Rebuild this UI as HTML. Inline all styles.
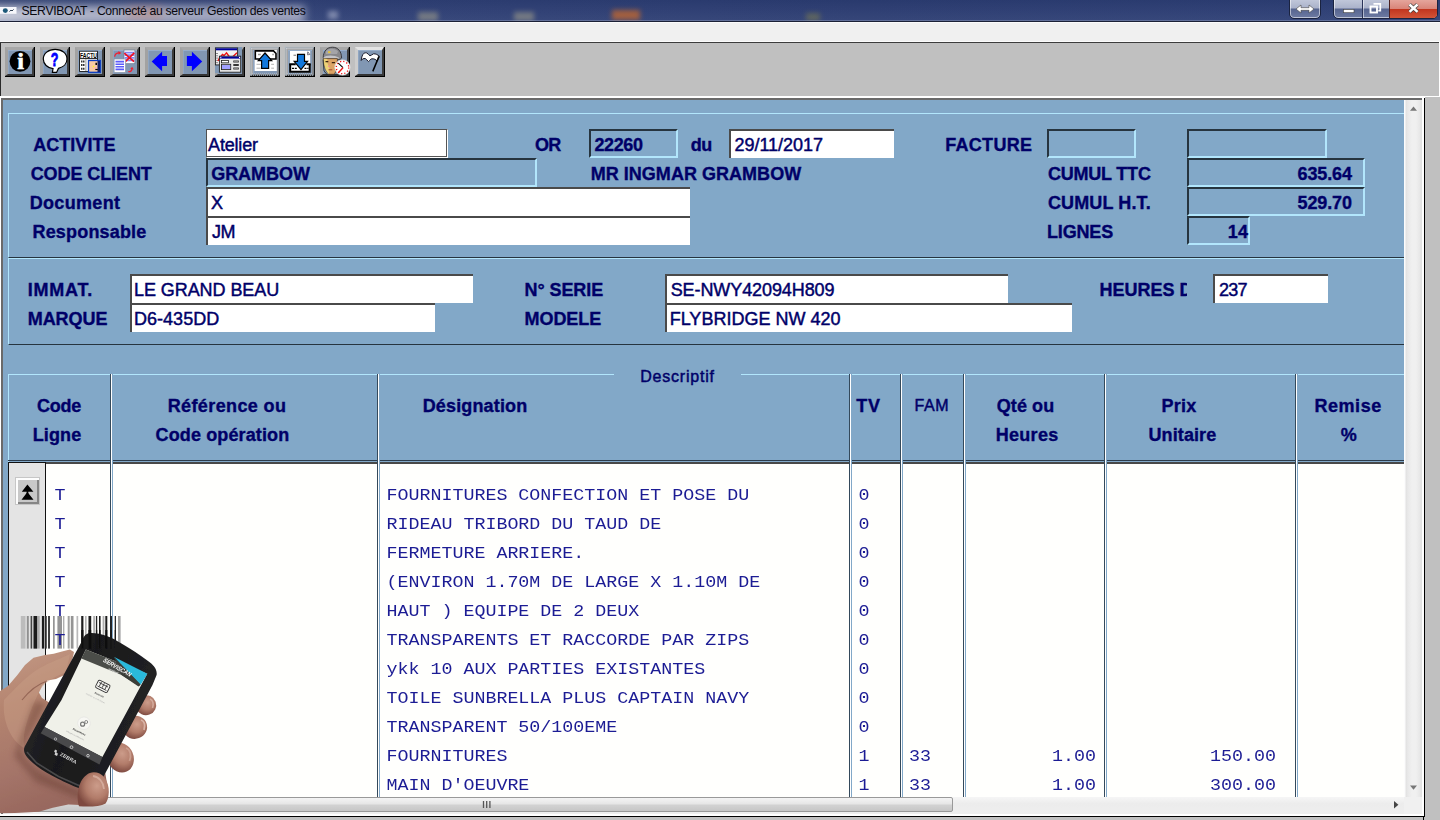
<!DOCTYPE html>
<html lang="fr"><head><meta charset="utf-8"><title>SERVIBOAT - Connecté au serveur Gestion des ventes</title>
<style>
html,body{margin:0;padding:0;}
body{width:1440px;height:820px;overflow:hidden;background:#c0c0c0;position:relative;font-family:"Liberation Sans", sans-serif;}
div,span,svg{position:absolute;box-sizing:border-box;}
.t{white-space:pre;color:#000068;}
.b{font-weight:bold;-webkit-text-stroke:.35px #000068;}
.r{font-weight:normal;-webkit-text-stroke:.45px #000068;}
.m{font-family:"Liberation Mono", monospace;color:#1c1c94;transform:scaleY(.865);}
.fw{background:#fff;border-top:2px solid #4a4a4a;border-left:2px solid #4a4a4a;}
.fb{background:#82a8c8;border-top:2px solid #26343f;border-left:2px solid #26343f;border-right:2px solid #b2e6fc;border-bottom:2px solid #b2e6fc;}
.pn{border-top:1px solid #b2e6fc;border-left:1px solid #b2e6fc;border-bottom:1px solid #26343f;}
.tb{width:29px;height:29px;top:47px;background:#8197b3;border-style:solid;border-width:3px 2px 2px 3px;border-color:#a8a8a8 #3c3c3c #343434 #a2a2a2;box-shadow:inset 0 1px 0 #97adc9,inset 1px 0 0 #8fa5c1,1px 0 0 #000,0 1px 0 #000,1px 1px 0 #000;}
.cs{width:3px;top:374px;height:423px;background:linear-gradient(90deg,#34495b 0,#34495b 1px,#fff 1px,#fff 2px,#82a8c8 2px);}
</style></head><body>
<div style="left:0px;top:0px;width:1440px;height:21px;background:linear-gradient(180deg,rgba(0,0,0,.04),rgba(255,255,255,.05)),linear-gradient(90deg,#3a4a7a 0,#2e3f75 25%,#2b3c72 60%,#2d3f76 100%);overflow:hidden;"><div style="left:328px;top:11px;width:10px;height:8px;background:#c8cce0;filter:blur(2.5px);opacity:0.5"></div><div style="left:418px;top:12px;width:20px;height:9px;background:#c0b890;filter:blur(2.5px);opacity:0.45"></div><div style="left:514px;top:12px;width:20px;height:9px;background:#c0b890;filter:blur(2.5px);opacity:0.45"></div><div style="left:612px;top:10px;width:28px;height:10px;background:#d06a28;filter:blur(2.5px);opacity:0.7"></div><div style="left:806px;top:13px;width:14px;height:8px;background:#9a9440;filter:blur(2.5px);opacity:0.4"></div></div>
<div style="left:0px;top:0px;width:340px;height:21px;overflow:hidden;"><div style="left:-25px;top:6px;width:330px;height:18px;background:linear-gradient(90deg,#d4d7e2 0,#b4b8cb 22%,#a4a9c1 60%,#9ea3bd 100%);filter:blur(4px)"></div><div style="left:128px;top:7px;width:34px;height:12px;background:#c47a62;opacity:.4;filter:blur(4px)"></div></div>
<div style="left:0px;top:20px;width:1440px;height:1px;background:rgba(190,198,222,.32);"></div>
<div style="left:0px;top:21px;width:1440px;height:1px;background:#1b2036;"></div>
<div style="left:0px;top:22px;width:1440px;height:20px;background:#f0f0f0;border-top:1px solid #fbfbfb;"></div>
<div style="left:0px;top:41px;width:1440px;height:1px;background:#fbfbfb;"></div>
<div style="left:0px;top:42px;width:1439px;height:1px;background:#3c3c3c;"></div>
<div style="left:0px;top:43px;width:1439px;height:53px;background:#c0c0c0;border-left:1px solid #2a2a2a;"></div>
<div style="left:1439px;top:42px;width:1px;height:54px;background:#fff;"></div>
<div style="left:0px;top:96px;width:1440px;height:2px;background:#fff;"></div>
<div style="left:0px;top:98px;width:1425px;height:719px;background:#000;"></div>
<div style="left:0px;top:98px;width:1424px;height:718px;background:#fff;"></div>
<div style="left:1px;top:98px;width:1421px;height:716px;background:#82a8c8;border-top:2px solid #6a6a6a;border-left:2px solid #6a6a6a;"></div>
<div style="left:1425px;top:97px;width:15px;height:723px;background:#c0c0c0;"></div>
<div style="left:0px;top:817px;width:1440px;height:3px;background:#c0c0c0;"></div>
<div style="left:1423px;top:817px;width:1px;height:3px;background:#000;"></div>
<svg style="left:0;top:6px" width="18" height="9"><rect x="0" y="1" width="16.500" height="6.800" fill="#f6f7fb"/><ellipse cx="5.300" cy="4.600" rx="2.500" ry="2.300" fill="#1b5878"/><path d="M9.500 5.600l1.500-1.600 1 1 1.600-1.600" stroke="#345" stroke-width="1" fill="none"/></svg>
<div style="left:1289px;top:-2px;width:32px;height:21px;border:1px solid #1a2340;border-radius:0 0 5px 5px;background:linear-gradient(#c3c9db 0,#aab2ca 48%,#56648f 52%,#6e7ba3 100%);box-shadow:inset 0 0 0 1px rgba(255,255,255,.55);"><svg style="left:5px;top:5px" width="20" height="10"><path d="M1 5 L6 1 L6 3.7 L14 3.7 L14 1 L19 5 L14 9 L14 6.3 L6 6.3 L6 9 Z" fill="#fff" stroke="#444" stroke-width=".6"/></svg></div>
<div style="left:1333px;top:-2px;width:105px;height:21px;border:1px solid #1a2340;border-radius:0 0 5px 5px;background:linear-gradient(#c3c9db 0,#aab2ca 48%,#56648f 52%,#6e7ba3 100%);box-shadow:inset 0 0 0 1px rgba(255,255,255,.55);overflow:hidden;"><div style="left:28px;top:0;width:1px;height:20px;background:#2a3358"></div><div style="left:29px;top:0;width:1px;height:20px;background:rgba(255,255,255,.5)"></div><div style="left:55px;top:0;width:49px;height:20px;background:linear-gradient(#e6a9a0 0,#d98579 48%,#c2361f 52%,#d4573a 100%);border-left:1px solid #4a2020"></div><svg style="left:0;top:0" width="105" height="20"><rect x="9.5" y="10.5" width="10.5" height="3.2" fill="#fff" stroke="#444" stroke-width=".6"/><path d="M39.500 4.800h6.800v6.800h-2" fill="none" stroke="#fff" stroke-width="1.700"/><rect x="36.500" y="7.500" width="6.500" height="6" fill="none" stroke="#fff" stroke-width="1.900"/><path d="M75.500 5.500 L83.500 12.800 M83.500 5.500 L75.500 12.800" stroke="#444" stroke-width="3.800"/><path d="M75.500 5.500 L83.500 12.800 M83.500 5.500 L75.500 12.800" stroke="#fff" stroke-width="2.500"/></svg></div>
<div class="tb" style="left:5px;"><svg width="24" height="24" viewBox="0 0 24 24" style="left:0;top:0;overflow:visible"><circle cx="12" cy="11.3" r="10.4" fill="#000"/><text x="12.6" y="19.1" font-family="Liberation Serif, serif" font-weight="bold" font-size="24" fill="#fff" stroke="#fff" stroke-width=".7" text-anchor="middle">i</text></svg></div>
<div class="tb" style="left:40px;"><svg width="24" height="24" viewBox="0 0 24 24" style="left:0;top:0;overflow:visible"><path d="M12.2 -0.6 C19 -0.6 24 3.5 24 9 C24 13.5 20.500 17.2 15.5 18.3 L13.6 22.4 L9.400 22.4 L10 18.6 C4.500 18 0.3 14 0.3 9 C0.3 3.500 5.400 -0.6 12.2 -0.6 Z" fill="#fff" stroke="#000" stroke-width="1.2"/><text transform="translate(11.6 15.8) scale(.66 1)" font-family="Liberation Sans, sans-serif" font-weight="bold" font-size="19" fill="#0000ff" stroke="#0000ff" stroke-width=".8" text-anchor="middle">?</text></svg></div>
<div class="tb" style="left:75px;"><svg width="24" height="24" viewBox="0 0 24 24" style="left:0;top:0;overflow:visible"><rect x="1.6" y="1.2" width="17.800" height="20.3" fill="#fff" stroke="#000" stroke-width=".8"/><text x="2" y="7.9" font-family="Liberation Sans, sans-serif" font-weight="bold" font-size="7" fill="#000" textLength="17" lengthAdjust="spacingAndGlyphs">FACTU</text><path d="M2 8.600h17" stroke="#000" stroke-width=".9"/><path d="M3 11.5h3.500M3 15h3.500M3 18.800h3.500" stroke="#333" stroke-width="1.900" stroke-dasharray="1.500 .5"/><path d="M7.900 9v12" stroke="#999" stroke-width="1"/><rect x="10.500" y="10.5" width="11.800" height="11.800" fill="#f7c9a4" stroke="#0a3cc0" stroke-width="1.3"/><rect x="19.500" y="11" width="2.500" height="11" fill="#10206a"/><path d="M18.200 12.800v2.200" stroke="#000" stroke-width="1.500"/><path d="M17.300 19.500h2.500" stroke="#000" stroke-width="1.200"/><rect x="14.900" y="15.800" width="1.300" height="1.300" fill="#ff0"/><rect x="16.800" y="17.300" width="1.600" height="1.300" fill="#f8a0b0"/></svg></div>
<div class="tb" style="left:110px;"><svg width="24" height="24" viewBox="0 0 24 24" style="left:0;top:0;overflow:visible"><rect x="11" y="0" width="10.900" height="13.700" fill="#fff" stroke="#6a7a90" stroke-width=".7"/><path d="M11.600 2.600h9.800M11.600 5.200h9.800M11.600 7.800h9.800M11.600 10.400h9.800" stroke="#8585f2" stroke-width="1.700"/><path d="M11.300 3.100 L21 11.600 M21.300 2.800 L12.300 11.600" stroke="#f01020" stroke-width="1.700"/><rect x="1.100" y="9" width="11.400" height="13.400" fill="#fff" stroke="#8a96a8" stroke-width=".7"/><path d="M2.500 11.600h8.500M2.500 14.200h8.500M2.500 16.800h8.500M2.500 19.400h8.500" stroke="#5c5cfa" stroke-width="1.600"/><path d="M1.600 6.600 C2 4.200 4 2.900 6.300 2.900" stroke="#f02030" stroke-width="1.300" fill="none"/><path d="M5.400 1 L8.300 2.900 L5.600 4.800 Z" fill="#f02030"/><path d="M15.300 21.700 C17.500 21.700 19 20.500 19 18.700" stroke="#f02030" stroke-width="1.300" fill="none"/><path d="M17.200 18.900 L19.200 16.700 L20.700 19.400 Z" fill="#f02030"/></svg></div>
<div class="tb" style="left:145px;"><svg width="24" height="24" viewBox="0 0 24 24" style="left:0;top:0;overflow:visible"><path d="M3.700 11.400 L14.100 1.800 L14.100 6 L19 6 L19 16 L14.100 16 L14.100 21.200 Z" fill="#0000ff"/></svg></div>
<div class="tb" style="left:180px;"><svg width="24" height="24" viewBox="0 0 24 24" style="left:0;top:0;overflow:visible"><path d="M19.200 11.400 L8.900 1.800 L8.900 6 L3.900 6 L3.900 16 L8.900 16 L8.900 21.200 Z" fill="#0000ff"/></svg></div>
<div class="tb" style="left:215px;"><svg width="24" height="24" viewBox="0 0 24 24" style="left:0;top:0;overflow:visible"><rect x="-3" y="-3" width="27" height="26" fill="#8199b5"/><rect x="-2.600" y="-2.100" width="22.200" height="17" fill="#f2f2f2" stroke="#222" stroke-width=".9"/><rect x="-2.100" y="-1.700" width="21.200" height="2" fill="#00009c"/><path d="M-1 3v11" stroke="#222" stroke-width="1" stroke-dasharray="1 1.300"/><path d="M0 11 L1.500 8 L4.500 4.500 L6 5.600 L8.500 2.800 L11.500 7 M15 6.500 L19 2.700" stroke="#f01010" stroke-width="1.400" fill="none"/><rect x="1.400" y="6.200" width="21.300" height="16" fill="#e9e9e9" stroke="#222" stroke-width=".9"/><rect x="1.900" y="6.600" width="20.300" height="2" fill="#00009c"/><rect x="2.300" y="6.900" width="1" height="1.200" fill="#fff"/><rect x="21" y="6.900" width="1" height="1.200" fill="#fff"/><rect x="3.500" y="10.500" width="7" height="2.300" fill="#fff" stroke="#222" stroke-width=".8"/><rect x="3.500" y="14.300" width="9.200" height="5.300" fill="#fff" stroke="#222" stroke-width=".9"/><path d="M4 16h8.200M4 18h8.200" stroke="#4444ff" stroke-width="1.100"/><path d="M15.300 11.500h5.500M15.300 15h5.500M15.300 18.500h5.500" stroke="#333" stroke-width="2.200"/><path d="M16 11.500h4M16 18.500h4" stroke="#999" stroke-width=".8"/></svg></div>
<div class="tb" style="left:250px;"><svg width="24" height="24" viewBox="0 0 24 24" style="left:0;top:0;overflow:visible"><rect x="-2.500" y="-2.500" width="28" height="27.500" fill="none" stroke="#aab8c4" stroke-width="1.300" stroke-dasharray="1 1"/><rect x="-1.500" y="-1.500" width="26" height="25.500" fill="none" stroke="#c8ccd4" stroke-width="1.200" stroke-dasharray="1 1"/><rect x="1.600" y="0" width="22.200" height="21" fill="#fff"/><path d="M2.300 .9 L20.500 .9 L23 3.500 L23 9 L2.300 9 Z" fill="#fff" stroke="#000" stroke-width="1.600"/><path d="M12 3 L18.700 10.600 L15.600 10.600 L15.600 18.400 L8.600 18.400 L8.600 10.600 L5.300 10.600 Z" fill="#1278dc" stroke="#000" stroke-width="1.200" stroke-linejoin="miter"/><path d="M3.500 14.300h4.200M18.200 14.300h2.800M3.500 18.200h4.200M18.200 18.200h2.800" stroke="#aaa" stroke-width=".9"/><path d="M5 4.500h2.800M19.300 4.500h1.500" stroke="#999" stroke-width="1.400"/></svg></div>
<div class="tb" style="left:285px;"><svg width="24" height="24" viewBox="0 0 24 24" style="left:0;top:0;overflow:visible"><rect x="-2.500" y="-2.500" width="28" height="27.500" fill="none" stroke="#aab8c4" stroke-width="1.300" stroke-dasharray="1 1"/><rect x="-1.500" y="-1.500" width="26" height="25.500" fill="none" stroke="#c8ccd4" stroke-width="1.200" stroke-dasharray="1 1"/><rect x="1.900" y="1" width="20.300" height="21.400" fill="#fff"/><path d="M9.500 4.300 L16.500 4.300 L16.500 11.300 L19.600 11.300 L13 19.600 L6.200 11.300 L9.500 11.300 Z" fill="#1278dc" stroke="#000" stroke-width="1.200"/><path d="M2.200 14.200 L2.200 21.700 L21.700 21.700 L21.700 14.200" fill="none" stroke="#000" stroke-width="2"/><path d="M1.200 14.200h6.500M18.500 14.200h4.200" stroke="#000" stroke-width="2"/><path d="M4 18.400h5.500M16.500 18.400h4" stroke="#000" stroke-width="1.100" stroke-dasharray="2 .8"/><path d="M5.500 5.300h2.500" stroke="#999" stroke-width="1.400"/><path d="M19.800 1.800 L21.800 4.500 L19.500 4.800Z" fill="#fff" stroke="#556" stroke-width=".8"/></svg></div>
<div class="tb" style="left:320px;"><svg width="27" height="27" viewBox="0 0 27 27" style="left:0;top:0;overflow:visible"><path d="M0.200 8.300 C0.200 1 4 -2.800 9.500 -2.800 C15 -2.800 18.600 1.500 18.600 8 L17 9.500 L1 9 Z" fill="#88888c" stroke="#26262a" stroke-width=".8"/><path d="M3 1 C6 -2 12 -2 15 1.500 L14 4 L3 4Z" fill="#a4a4a8"/><path d="M0.200 8 C3 4.800 11 4.800 16 7.800 L15 9.500 L1.500 9 Z" fill="#c4c4c8"/><rect x="5.100" y="1.200" width="2.400" height="1.900" fill="#e6c63a"/><path d="M0.600 8.600 C0.600 14 2 21 6 24.300 L11 24.300 C13.500 22 14.400 16 14.400 8.600 Z" fill="#dca466" stroke="#3a2a1a" stroke-width=".7"/><path d="M0.600 8.600 C0.600 14 2 21 6 24.300 L6.500 18 L4 12 L4.500 9Z" fill="#f4e27c" opacity=".75"/><path d="M2.500 11.700h2.800M8.800 12.600h3.200" stroke="#3a2410" stroke-width="1.300"/><path d="M5.400 15.800l.8 1.200" stroke="#f48aa0" stroke-width="1.300"/><path d="M5.500 19.800h3.800" stroke="#a04a30" stroke-width="1"/><path d="M0 9.500 L1 21 L4 24.300" stroke="#222" stroke-width=".8" fill="none"/><circle cx="19.500" cy="17.500" r="7.800" fill="#fff" stroke="#ccc" stroke-width=".6"/><circle cx="19.500" cy="17.500" r="6.200" fill="none" stroke="#f01010" stroke-width="1.300" stroke-dasharray="1.200 2.047"/><path d="M15.300 13.200 L20 17.700" stroke="#000" stroke-width="1.100"/><path d="M20 17.700 L15.600 22.500" stroke="#f01010" stroke-width="1.300"/></svg></div>
<div class="tb" style="left:355px;border-top-color:#e4e4e4;border-left-color:#cdcdcd;"><svg width="24" height="24" viewBox="0 0 24 24" style="left:0;top:0;overflow:visible"><path d="M3.200 10.500 C3.500 7 4.500 4.500 5.800 3.400 C7 2.700 8 2.700 8.900 3 C10 3.800 11 5.200 12 5.800 C13.200 5.600 14.300 4.200 15.500 3.800 C16.600 3.700 17.700 4 18.700 4.400 L21.400 6.200 L19 11.200 C18.400 10.300 17.700 9.600 17.100 9.300 C15.800 8.800 14.500 8.700 13.200 8.900 C12.200 9.800 11.400 11 10.500 11.600 C9.400 10.600 8.400 9.200 7.300 8.500 C6.400 8.400 5.500 8.500 4.600 8.900 Z" fill="#fff" stroke="#1a1a2a" stroke-width="1" stroke-linejoin="round"/><path d="M21 6.400 L14.800 21.400" stroke="#000" stroke-width="1.500"/></svg></div>
<div class="pn" style="left:8px;top:113px;width:1400px;height:145px;"></div>
<div class="pn" style="left:8px;top:258px;width:1400px;height:87px;"></div>
<div style="left:206px;top:129px;width:242px;height:29px;background:#fff;border:1px solid #505050;border-right:1px solid #fff;border-bottom:1px solid #fff;box-shadow:inset -1px -1px 0 #555;"></div>
<div class="fb" style="left:206px;top:158px;width:331px;height:29px;"></div>
<div class="fw" style="left:206px;top:187px;width:484px;height:29px;"></div>
<div class="fw" style="left:206px;top:216px;width:484px;height:29px;"></div>
<div class="fb" style="left:589px;top:129px;width:89px;height:29px;"></div>
<div class="fw" style="left:729px;top:129px;width:165px;height:29px;"></div>
<div class="fb" style="left:1047px;top:129px;width:89px;height:29px;"></div>
<div class="fb" style="left:1187px;top:129px;width:140px;height:29px;"></div>
<div class="fb" style="left:1187px;top:158px;width:178px;height:29px;"></div>
<div class="fb" style="left:1187px;top:187px;width:178px;height:29px;"></div>
<div class="fb" style="left:1187px;top:216px;width:63px;height:29px;"></div>
<div class="fw" style="left:130px;top:274px;width:343px;height:29px;"></div>
<div class="fw" style="left:130px;top:303px;width:305px;height:29px;"></div>
<div class="fw" style="left:665px;top:274px;width:343px;height:29px;"></div>
<div class="fw" style="left:665px;top:303px;width:407px;height:29px;"></div>
<div class="fw" style="left:1213px;top:274px;width:115px;height:29px;"></div>
<div style="left:8px;top:374px;width:606px;height:1px;background:#b2e6fc;"></div>
<div style="left:741px;top:374px;width:663px;height:1px;background:#b2e6fc;"></div>
<div style="left:8px;top:374px;width:1px;height:88px;background:#b2e6fc;"></div>
<div style="left:8px;top:460px;width:1396px;height:1px;background:#2c3c4c;"></div>
<div style="left:8px;top:462px;width:1396px;height:2px;background:#484848;"></div>
<div style="left:8px;top:464px;width:1396px;height:333px;background:#fffffd;"></div>
<div style="left:8px;top:462px;width:38px;height:335px;background:#e4e4e4;border-left:1px solid #111;border-top:1px solid #111;border-right:1px solid #111;"></div>
<div style="left:15px;top:477px;width:25px;height:28px;background:#c8c8c8;border:1px solid #c6c6c6;box-shadow:inset 2px 2px 0 #fdfdfd,inset -2px -2px 0 #858585;"><svg width="23" height="26" viewBox="16 478 23 26" style="left:0;top:0"><path d="M27.400 484.400 L33.400 491.700 L21.800 491.700 Z M27.400 492 L33.500 499.700 L21.500 499.700 Z" fill="#000"/><rect x="26.600" y="490" width="1.700" height="4" fill="#000"/></svg></div>
<div class="cs" style="left:110px"></div>
<div class="cs" style="left:377px"></div>
<div class="cs" style="left:849px"></div>
<div class="cs" style="left:900px"></div>
<div class="cs" style="left:963px"></div>
<div class="cs" style="left:1104px"></div>
<div class="cs" style="left:1295px"></div>
<svg style="left:0;top:600px" width="220" height="60" viewBox="0 600 220 60"><defs><filter id="bl0"><feGaussianBlur stdDeviation=".45"/></filter></defs><g opacity=".93" filter="url(#bl0)"><rect x="20.8" y="616" width="4.7" height="32.6" fill="#b9b9b9"/><rect x="26.8" y="616" width="2.0" height="32.6" fill="#8a8a8a"/><rect x="30.6" y="616" width="1.6" height="32.6" fill="#3a3a3a"/><rect x="33.5" y="616" width="3.8" height="32.6" fill="#0a0a0a"/><rect x="38.2" y="616" width="1.4" height="32.6" fill="#9a9a9a"/><rect x="41.9" y="616" width="2.4" height="32.6" fill="#111"/><rect x="45.6" y="616" width="1.4" height="32.6" fill="#555"/><rect x="48" y="616" width="2.0" height="32.6" fill="#333"/><rect x="53" y="616" width="1.7" height="32.6" fill="#8c8c8c"/><rect x="57.4" y="616" width="4.6" height="32.6" fill="#8e8e8e"/><rect x="63" y="616" width="1.4" height="32.6" fill="#aaa"/><rect x="67.7" y="616" width="2.0" height="32.6" fill="#9a9a9a"/><rect x="70.8" y="616" width="2.7" height="32.6" fill="#8c8c8c"/><rect x="76.5" y="616" width="1.7" height="32.6" fill="#b4b4b4"/><rect x="81.2" y="616" width="2.2" height="32.6" fill="#111"/><rect x="85.2" y="616" width="1.3" height="32.6" fill="#999"/><rect x="88.5" y="616" width="2.7" height="32.6" fill="#0c0c0c"/><rect x="93.2" y="616" width="1.8" height="32.6" fill="#aaa"/><rect x="95.9" y="616" width="1.3" height="32.6" fill="#151515"/><rect x="99" y="616" width="1.6" height="32.6" fill="#111"/><rect x="102.6" y="616" width="1.8" height="32.6" fill="#a8a8a8"/><rect x="105.3" y="616" width="2.0" height="32.6" fill="#0c0c0c"/><rect x="110.3" y="616" width="1.7" height="32.6" fill="#151515"/><rect x="114.7" y="616" width="1.3" height="32.6" fill="#1a1a1a"/><rect x="118" y="616" width="2.6" height="32.6" fill="#9c9c9c"/></g></svg>
<span class="t r" style="left:21.50px;top:4.50px;font-size:12.2px;line-height:12px;letter-spacing:-0.321px;color:#08080f;-webkit-text-stroke:0;">SERVIBOAT - Connecté au serveur Gestion des ventes</span>
<span class="t b" style="left:33.20px;top:136.00px;font-size:18px;line-height:18px;letter-spacing:0.043px;">ACTIVITE</span>
<span class="t b" style="left:30.70px;top:165.00px;font-size:18px;line-height:18px;letter-spacing:-0.091px;">CODE CLIENT</span>
<span class="t b" style="left:29.70px;top:194.00px;font-size:18px;line-height:18px;letter-spacing:0.327px;">Document</span>
<span class="t b" style="left:32.50px;top:223.00px;font-size:18px;line-height:18px;letter-spacing:0.178px;">Responsable</span>
<span class="t r" style="left:208.10px;top:136.00px;font-size:18px;line-height:18px;letter-spacing:-0.188px;">Atelier</span>
<span class="t b" style="left:211.20px;top:165.00px;font-size:18px;line-height:18px;letter-spacing:-0.032px;">GRAMBOW</span>
<span class="t r" style="left:211.00px;top:194.00px;font-size:18px;line-height:18px;">X</span>
<span class="t r" style="left:212.00px;top:223.00px;font-size:18px;line-height:18px;letter-spacing:-0.500px;">JM</span>
<span class="t b" style="left:535.00px;top:136.00px;font-size:18px;line-height:18px;letter-spacing:-0.800px;">OR</span>
<span class="t b" style="left:594.50px;top:136.00px;font-size:18px;line-height:18px;letter-spacing:-0.386px;">22260</span>
<span class="t b" style="left:690.70px;top:136.00px;font-size:18px;line-height:18px;letter-spacing:-0.495px;">du</span>
<span class="t r" style="left:734.50px;top:136.00px;font-size:18px;line-height:18px;letter-spacing:-0.027px;">29/11/2017</span>
<span class="t b" style="left:590.70px;top:165.00px;font-size:18px;line-height:18px;letter-spacing:0.032px;">MR INGMAR GRAMBOW</span>
<span class="t b" style="left:945.20px;top:136.00px;font-size:18px;line-height:18px;letter-spacing:0.301px;">FACTURE</span>
<span class="t b" style="left:1048.00px;top:165.00px;font-size:18px;line-height:18px;letter-spacing:-0.222px;">CUMUL TTC</span>
<span class="t b" style="left:1048.00px;top:194.00px;font-size:18px;line-height:18px;letter-spacing:0.113px;">CUMUL H.T.</span>
<span class="t b" style="left:1047.00px;top:223.00px;font-size:18px;line-height:18px;letter-spacing:-0.160px;">LIGNES</span>
<span class="t b" style="left:1297.50px;top:165.00px;font-size:18px;line-height:18px;letter-spacing:-0.109px;">635.64</span>
<span class="t b" style="left:1297.50px;top:194.00px;font-size:18px;line-height:18px;letter-spacing:-0.109px;">529.70</span>
<span class="t b" style="left:1227.70px;top:223.00px;font-size:18px;line-height:18px;letter-spacing:0.289px;">14</span>
<div style="left:0;top:0;width:1187px;height:400px;overflow:hidden"><span class="t b" style="left:1099.50px;top:281.00px;font-size:18px;line-height:18px;">HEURES D</span></div>
<span class="t b" style="left:27.70px;top:281.00px;font-size:18px;line-height:18px;letter-spacing:0.770px;">IMMAT.</span>
<span class="t b" style="left:27.70px;top:310.00px;font-size:18px;line-height:18px;letter-spacing:-0.038px;">MARQUE</span>
<span class="t r" style="left:134.00px;top:281.00px;font-size:18px;line-height:18px;letter-spacing:-0.070px;">LE GRAND BEAU</span>
<span class="t r" style="left:134.00px;top:310.00px;font-size:18px;line-height:18px;letter-spacing:0.024px;">D6-435DD</span>
<span class="t b" style="left:524.50px;top:281.00px;font-size:18px;line-height:18px;letter-spacing:-0.073px;">N° SERIE</span>
<span class="t b" style="left:524.50px;top:310.00px;font-size:18px;line-height:18px;letter-spacing:-0.059px;">MODELE</span>
<span class="t r" style="left:670.70px;top:281.00px;font-size:18px;line-height:18px;letter-spacing:-0.091px;">SE-NWY42094H809</span>
<span class="t r" style="left:669.70px;top:310.00px;font-size:18px;line-height:18px;letter-spacing:0.007px;">FLYBRIDGE NW 420</span>
<span class="t r" style="left:1219.00px;top:281.00px;font-size:18px;line-height:18px;letter-spacing:-0.800px;">237</span>
<span class="t r" style="left:640.20px;top:368.50px;font-size:16px;line-height:16px;letter-spacing:0.785px;">Descriptif</span>
<span class="t b" style="left:37.00px;top:397.00px;font-size:18px;line-height:18px;letter-spacing:-0.263px;">Code</span>
<span class="t b" style="left:32.70px;top:426.00px;font-size:18px;line-height:18px;letter-spacing:0.128px;">Ligne</span>
<span class="t b" style="left:167.70px;top:397.00px;font-size:18px;line-height:18px;letter-spacing:0.387px;">Référence ou</span>
<span class="t b" style="left:155.50px;top:426.00px;font-size:18px;line-height:18px;letter-spacing:0.130px;">Code opération</span>
<span class="t b" style="left:422.70px;top:397.00px;font-size:18px;line-height:18px;letter-spacing:0.149px;">Désignation</span>
<span class="t b" style="left:856.20px;top:397.00px;font-size:18px;line-height:18px;letter-spacing:0.800px;">TV</span>
<span class="t r" style="left:914.50px;top:397.50px;font-size:16px;line-height:16px;letter-spacing:0.569px;">FAM</span>
<span class="t b" style="left:996.70px;top:397.00px;font-size:18px;line-height:18px;letter-spacing:0.100px;">Qté ou</span>
<span class="t b" style="left:995.70px;top:426.00px;font-size:18px;line-height:18px;letter-spacing:0.296px;">Heures</span>
<span class="t b" style="left:1161.50px;top:397.00px;font-size:18px;line-height:18px;letter-spacing:0.229px;">Prix</span>
<span class="t b" style="left:1148.50px;top:426.00px;font-size:18px;line-height:18px;letter-spacing:0.099px;">Unitaire</span>
<span class="t b" style="left:1314.50px;top:397.00px;font-size:18px;line-height:18px;letter-spacing:0.535px;">Remise</span>
<span class="t b" style="left:1340.70px;top:426.00px;font-size:18px;line-height:18px;">%</span>
<span class="t m" style="left:54.50px;top:486.50px;font-size:18.33px;line-height:18px;transform-origin:0 13.5px;">T</span>
<span class="t m" style="left:386.40px;top:486.50px;font-size:18.33px;line-height:18px;transform-origin:0 13.5px;">FOURNITURES CONFECTION ET POSE DU</span>
<span class="t m" style="left:858.40px;top:486.50px;font-size:18.33px;line-height:18px;transform-origin:0 13.5px;">0</span>
<span class="t m" style="left:54.50px;top:515.50px;font-size:18.33px;line-height:18px;transform-origin:0 13.5px;">T</span>
<span class="t m" style="left:386.40px;top:515.50px;font-size:18.33px;line-height:18px;transform-origin:0 13.5px;">RIDEAU TRIBORD DU TAUD DE</span>
<span class="t m" style="left:858.40px;top:515.50px;font-size:18.33px;line-height:18px;transform-origin:0 13.5px;">0</span>
<span class="t m" style="left:54.50px;top:544.50px;font-size:18.33px;line-height:18px;transform-origin:0 13.5px;">T</span>
<span class="t m" style="left:386.40px;top:544.50px;font-size:18.33px;line-height:18px;transform-origin:0 13.5px;">FERMETURE ARRIERE.</span>
<span class="t m" style="left:858.40px;top:544.50px;font-size:18.33px;line-height:18px;transform-origin:0 13.5px;">0</span>
<span class="t m" style="left:54.50px;top:573.50px;font-size:18.33px;line-height:18px;transform-origin:0 13.5px;">T</span>
<span class="t m" style="left:386.40px;top:573.50px;font-size:18.33px;line-height:18px;transform-origin:0 13.5px;">(ENVIRON 1.70M DE LARGE X 1.10M DE</span>
<span class="t m" style="left:858.40px;top:573.50px;font-size:18.33px;line-height:18px;transform-origin:0 13.5px;">0</span>
<span class="t m" style="left:54.50px;top:602.50px;font-size:18.33px;line-height:18px;transform-origin:0 13.5px;">T</span>
<span class="t m" style="left:386.40px;top:602.50px;font-size:18.33px;line-height:18px;transform-origin:0 13.5px;">HAUT ) EQUIPE DE 2 DEUX</span>
<span class="t m" style="left:858.40px;top:602.50px;font-size:18.33px;line-height:18px;transform-origin:0 13.5px;">0</span>
<span class="t m" style="left:54.50px;top:631.50px;font-size:18.33px;line-height:18px;transform-origin:0 13.5px;">T</span>
<span class="t m" style="left:386.40px;top:631.50px;font-size:18.33px;line-height:18px;transform-origin:0 13.5px;">TRANSPARENTS ET RACCORDE PAR ZIPS</span>
<span class="t m" style="left:858.40px;top:631.50px;font-size:18.33px;line-height:18px;transform-origin:0 13.5px;">0</span>
<span class="t m" style="left:386.40px;top:660.50px;font-size:18.33px;line-height:18px;transform-origin:0 13.5px;">ykk 10 AUX PARTIES EXISTANTES</span>
<span class="t m" style="left:858.40px;top:660.50px;font-size:18.33px;line-height:18px;transform-origin:0 13.5px;">0</span>
<span class="t m" style="left:386.40px;top:689.50px;font-size:18.33px;line-height:18px;transform-origin:0 13.5px;">TOILE SUNBRELLA PLUS CAPTAIN NAVY</span>
<span class="t m" style="left:858.40px;top:689.50px;font-size:18.33px;line-height:18px;transform-origin:0 13.5px;">0</span>
<span class="t m" style="left:386.40px;top:718.50px;font-size:18.33px;line-height:18px;transform-origin:0 13.5px;">TRANSPARENT 50/100EME</span>
<span class="t m" style="left:858.40px;top:718.50px;font-size:18.33px;line-height:18px;transform-origin:0 13.5px;">0</span>
<span class="t m" style="left:386.40px;top:747.50px;font-size:18.33px;line-height:18px;transform-origin:0 13.5px;">FOURNITURES</span>
<span class="t m" style="left:858.40px;top:747.50px;font-size:18.33px;line-height:18px;transform-origin:0 13.5px;">1</span>
<span class="t m" style="left:909.00px;top:747.50px;font-size:18.33px;line-height:18px;transform-origin:0 13.5px;">33</span>
<span class="t m" style="left:1052.00px;top:747.50px;font-size:18.33px;line-height:18px;transform-origin:0 13.5px;">1.00</span>
<span class="t m" style="left:1210.00px;top:747.50px;font-size:18.33px;line-height:18px;transform-origin:0 13.5px;">150.00</span>
<span class="t m" style="left:386.40px;top:776.50px;font-size:18.33px;line-height:18px;transform-origin:0 13.5px;">MAIN D'OEUVRE</span>
<span class="t m" style="left:858.40px;top:776.50px;font-size:18.33px;line-height:18px;transform-origin:0 13.5px;">1</span>
<span class="t m" style="left:909.00px;top:776.50px;font-size:18.33px;line-height:18px;transform-origin:0 13.5px;">33</span>
<span class="t m" style="left:1052.00px;top:776.50px;font-size:18.33px;line-height:18px;transform-origin:0 13.5px;">1.00</span>
<span class="t m" style="left:1210.00px;top:776.50px;font-size:18.33px;line-height:18px;transform-origin:0 13.5px;">300.00</span>
<div style="left:1404px;top:100px;width:18px;height:697px;background:linear-gradient(90deg,#fcfcfc 0,#fcfcfc 1px,#e2e2e2 2px,#e9e9e9 4px,#f0f0f0 8px,#f0f0f0 12px,#e7e7e7 16px,#e0e0e0 18px);"></div>
<svg style="left:1404px;top:100px" width="18" height="697"><path d="M9.5 6.5 L13 10.8 L6 10.8 Z" fill="#777"/><path d="M6 685.5 L13 685.5 L9.5 689.8 Z" fill="#777"/></svg>
<div style="left:3px;top:797px;width:1401px;height:17px;background:linear-gradient(#f6f6f6,#ececec 40%,#eeeeee);"></div>
<div style="left:3px;top:797px;width:950px;height:15px;border:1px solid #999;border-radius:2px;background:linear-gradient(#f4f4f4 0,#e6e6e6 45%,#d2d2d2 55%,#c6c6c6 100%);"></div>
<svg style="left:480px;top:799px" width="14" height="12"><path d="M3.5 2v7M6.7 2v7M9.9 2v7" stroke="#555" stroke-width="1.3"/></svg>
<svg style="left:1390px;top:798px" width="12" height="14"><path d="M4 3 L8.4 6.7 L4 10.4 Z" fill="#444"/></svg>
<div style="left:1404px;top:797px;width:18px;height:17px;background:#f0f0f0;"></div>
<svg style="left:0;top:600px" width="220" height="220" viewBox="0 600 220 220">
<defs>
<linearGradient id="hg" x1="0" y1="0" x2="0.25" y2="1"><stop offset="0" stop-color="#c49a86"/><stop offset=".35" stop-color="#b4846f"/><stop offset=".7" stop-color="#a6766a"/><stop offset="1" stop-color="#98685e"/></linearGradient>
<linearGradient id="fg" x1="0" y1="0" x2="1" y2="1"><stop offset="0" stop-color="#8e5a4c"/><stop offset=".55" stop-color="#b8806c"/><stop offset="1" stop-color="#9a6252"/></linearGradient>
<radialGradient id="rg" cx=".62" cy=".4" r=".65"><stop offset="0" stop-color="#cc9c8a"/><stop offset=".55" stop-color="#b27c6a"/><stop offset="1" stop-color="#7e4a40"/></radialGradient><linearGradient id="pg" x1="0" y1="0" x2="1" y2=".4"><stop offset="0" stop-color="#2a2a2c"/><stop offset=".5" stop-color="#19191b"/><stop offset="1" stop-color="#222224"/></linearGradient>
<filter id="bl2" x="-20%" y="-20%" width="140%" height="140%"><feGaussianBlur stdDeviation="3"/></filter><filter id="bl" x="-5%" y="-5%" width="110%" height="110%"><feGaussianBlur stdDeviation=".45"/></filter>
</defs>
<g filter="url(#bl)">
<path d="M0 691 L8 686 L17.4 675 L25 665 L33.5 657.7 L45 655 L53.7 653.7 L62 651.5 L69.8 649.6 L74 652 L73 657 L70 665 L64.4 675 L56 679 L47 680.5 L42 686 L38.9 692.6 L42 698 L48.3 702 L100 740 L108 790 L105.4 801 L95 805 L80 805 L68.3 804.4 L61 806 L52.8 807.8 L38.9 811.7 L15 813 L0 813.3 Z" fill="url(#hg)"/>
<path d="M4 700 C14 690 26 676 40 668 C50 662 60 659 70 654 L66 672 C52 678 44 682 38 694 C30 712 22 730 24 748 C10 740 2 720 4 700Z" fill="#c9a088" opacity=".45"/>
<path d="M22 700 C30 690 38 684 47 681" stroke="#7a4a3e" stroke-width="1.200" fill="none" opacity=".6"/><path d="M47 702 L22 748 C22 756 30 764 40 771 L84 793 L82 799 L36 782 L14 756 L34 702 Z" fill="#5a3028" opacity=".38" filter="url(#bl2)"/>
<ellipse cx="146" cy="705.2" rx="10.200" ry="10" fill="url(#rg)" transform="rotate(-20 146 705.2)"/>
<ellipse cx="135" cy="727.3" rx="12.200" ry="11.500" fill="url(#rg)" transform="rotate(-20 135 727.3)"/>
<ellipse cx="120.500" cy="757.6" rx="13" ry="15.200" fill="url(#rg)" transform="rotate(-24 120.5 757.6)"/>
<path d="M150 699 C153 700 154 704 152.500 708" stroke="#e0bcae" stroke-width="1.600" fill="none" opacity=".7"/>
<path d="M141 720 C144.500 721 145.500 725 144 730" stroke="#e4c4b8" stroke-width="1.800" fill="none" opacity=".75"/>
<path d="M126 748 C130.500 749.500 131.500 755 129.500 761" stroke="#d8b0a2" stroke-width="1.800" fill="none" opacity=".6"/>
<path d="M82 641 C83.5 636 86 633.5 90 633 C100 632.5 112 637 121.5 643.6 C131 649 140 655 148 661 C153 664.5 157.5 669 156.6 675 L152.5 685 L103.8 776.1 C100 783 94 790 87 790.7 C84 790.5 70 785 58.500 779 C50 774.500 42 770 36.600 765.9 C30 761 24 755 24 750 C24 748 24.500 747 25 746 Z" fill="url(#pg)"/>
<path d="M27 752 L36.6 763 L58.500 776.5 L84 787.8" stroke="#48484a" stroke-width="1.6" fill="none"/>
<path d="M85.800 649.6 L147.3 673.8 L133.2 700 L102.4 757 L44.6 727 L61.5 700 Z" fill="#f0f1e9"/>
<path d="M85.800 649.6 L147.3 673.8 L139 685.9 L121.5 674.9 L81.4 658.4 Z" fill="#4c4e48"/>
<path d="M113.8 656.8 L147.3 673.8 L140.7 684.8 Z" fill="#2bb9db"/>
<path d="M113.8 656.8 L140.7 684.800 L138.5 686.5 L121.5 674.9 Z" fill="#3a3c38"/>
<path d="M44.6 727 L102.4 757 L99.5 764.5 L40.8 733.3 Z" fill="#4a4a4c"/>
<text transform="translate(102.6 661.3) rotate(29.5) skewX(-12)" font-family="Liberation Sans, sans-serif" font-weight="bold" font-size="6.2" fill="#fff" textLength="31" lengthAdjust="spacingAndGlyphs">SERVISCAN</text>
<text transform="translate(108.3 669.4) rotate(25)" font-family="Liberation Sans, sans-serif" font-weight="bold" font-size="2.4" fill="#eee">serviboat</text>
<g transform="translate(102.8 686.4) rotate(27)"><rect x="-6.5" y="-4.2" width="13" height="8.4" rx="1.5" fill="#f6f6f2" stroke="#333" stroke-width=".9"/><path d="M-5 -1.800h10M-3.200 -3.500v5M0 -3.500v5M3.200 -3.500v5M-5 2h10" stroke="#333" stroke-width=".8"/></g>
<text transform="translate(94.2 693.2) rotate(27)" font-family="Liberation Sans, sans-serif" font-weight="bold" font-size="2.6" fill="#444">Scanner</text>
<text transform="translate(85.500 694) rotate(27)" font-family="Liberation Sans, sans-serif" font-size="2" fill="#b4b4b4">Scanner un code barres</text>
<circle cx="84" cy="723.2" r="6.3" fill="#f7f7f3" stroke="#ddd" stroke-width=".5"/>
<circle cx="82.6" cy="724.2" r="2" fill="none" stroke="#777" stroke-width="1.2"/><circle cx="86.2" cy="722" r="1.5" fill="none" stroke="#888" stroke-width="1"/>
<text transform="translate(72.5 729.5) rotate(27)" font-family="Liberation Sans, sans-serif" font-weight="bold" font-size="2.6" fill="#333">Paramètres</text>
<text transform="translate(66 731.5) rotate(27)" font-family="Liberation Sans, sans-serif" font-size="1.8" fill="#aaa">Réglages et préférences</text>
<circle cx="55.5" cy="739" r="1.2" fill="none" stroke="#ddd" stroke-width=".6"/><circle cx="71.5" cy="747.2" r="1.4" fill="none" stroke="#eee" stroke-width=".7"/><circle cx="88" cy="755.7" r="1.3" fill="none" stroke="#eee" stroke-width=".7"/>
<path d="M55 749.500 l2 1 l-.5 2.500 l1.500 .5 l-1 2.500 l-2.500 -1.200 l.8 -2.200 l-1.200 -.6 Z" fill="#d0d0d0"/><text transform="translate(59.5 755.2) rotate(28.5)" font-family="Liberation Sans, sans-serif" font-weight="bold" font-size="5" fill="#dcdcdc" textLength="18.500" lengthAdjust="spacingAndGlyphs">ZEBRA</text>
<path d="M86.500 775 C91 770.500 100 771.500 104.500 777.500 C107.500 781.500 109 787 108.800 792 C108.600 797 107.500 801 105.600 803.500 C100 806.500 90 807 79 806.300 C76.500 799 77.500 788 81 781.500 C82.500 778.500 84.500 776.500 86.500 775 Z" fill="url(#rg)"/>
<path d="M93 776 C99 777 103.500 782 104 789" stroke="#e2c0b2" stroke-width="1.800" fill="none" opacity=".6"/>
<g opacity=".95"><rect x="81.2" y="630" width="2.2" height="18.6" fill="#111"/><rect x="88.5" y="630" width="2.7" height="18.6" fill="#0c0c0c"/><rect x="95.9" y="630" width="1.3" height="18.6" fill="#151515"/><rect x="99" y="630" width="1.6" height="18.6" fill="#111"/><rect x="105.3" y="630" width="2.0" height="18.6" fill="#0c0c0c"/><rect x="110.3" y="630" width="1.7" height="18.6" fill="#151515"/><rect x="114.7" y="630" width="1.3" height="18.6" fill="#1a1a1a"/></g>
</g>
</svg>
</body></html>
